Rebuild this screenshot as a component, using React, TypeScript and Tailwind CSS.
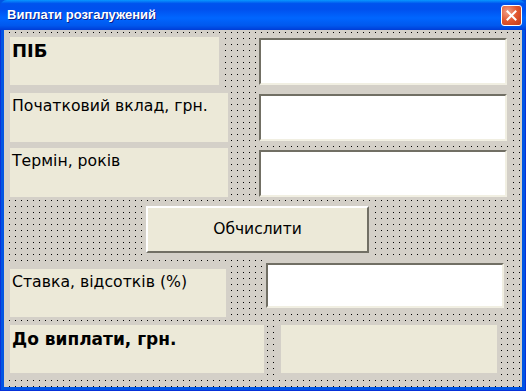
import React from "react";

const font = { fontFamily: '"DejaVu Sans", Verdana, sans-serif' };

function Label({ w, h, children, bold, size, pt = "pt-[3px]" }: { w: number; h: number; children?: React.ReactNode; bold?: boolean; size: string; pt?: string }) {
  return (
    <div
      className={`bg-[#ece9d8] shadow-[0_0_0_3px_#d4d0c8] text-black pl-[2px] leading-[20px] ${pt} ${bold ? "font-bold" : ""} ${size}`}
      style={{ width: w, height: h }}
    >
      {children}
    </div>
  );
}

function TextBox({ w, h, mt }: { w: number; h: number; mt: number }) {
  return (
    <div
      className="bg-white border-2 border-t-[#716f64] border-l-[#716f64] border-b-[#f1efe2] border-r-[#f1efe2] shadow-[0_0_0_3px_#d4d0c8]"
      style={{ width: w, height: h, marginTop: mt }}
    />
  );
}

export default function App() {
  return (
    <div className="w-[526px] h-[391px] flex flex-col bg-[#0054e3]" style={font}>
      <div className="h-[30px] shrink-0 flex items-center justify-between pl-[7px] pr-[4px] rounded-t-[7px] bg-[linear-gradient(180deg,#0997ff_0%,#0053ee_12%,#0050ee_30%,#0066ff_60%,#0058ee_85%,#003dd7_100%)]">
        <span className="text-white font-bold text-[13px] [text-shadow:1px_1px_0_#0a1e8c]" style={{ fontFamily: '"Liberation Sans", Arial, sans-serif' }}>
          Виплати розгалужений
        </span>
        <div className="w-[21px] h-[21px] rounded-[3px] border border-white bg-[radial-gradient(circle_at_30%_30%,#f0a08a_0%,#e2562e_50%,#c1391a_100%)] flex items-center justify-center">
          <svg width="11" height="11" viewBox="0 0 11 11">
            <path d="M1.5 1.5 L9.5 9.5 M9.5 1.5 L1.5 9.5" stroke="white" strokeWidth="2" strokeLinecap="square" />
          </svg>
        </div>
      </div>
      <div className="flex-1 px-[3px] pb-[3px] bg-[#0054e3] border-l border-r border-b border-[#0831d9]">
        <div className="w-full h-full bg-[#d4d0c8] bg-[radial-gradient(circle_at_5.5px_2.5px,#000_0.7px,transparent_0.8px)] bg-[size:6px_6px] flex flex-col pl-[6px]">
          <div className="flex mt-[7px] h-[48px]">
            <Label w={209} h={48} bold size="text-[18px]" pt="pt-[4px]">ПІБ</Label>
            <div className="w-[40px]" />
            <TextBox w={248} h={47} mt={1} />
          </div>
          <div className="flex mt-[8px] h-[49px]">
            <Label w={218} h={49} size="text-[15.7px]">Початковий вклад, грн.</Label>
            <div className="w-[31px]" />
            <TextBox w={248} h={47} mt={1} />
          </div>
          <div className="flex mt-[6px] h-[49px]">
            <Label w={218} h={49} size="text-[15.7px]">Термін, років</Label>
            <div className="w-[31px]" />
            <TextBox w={248} h={47} mt={2} />
          </div>
          <div className="flex mt-[9px] h-[47px]">
            <div className="w-[136px]" />
            <button className="w-[223px] h-[47px] bg-[#ece9d8] border-2 border-t-white border-l-white border-b-[#716f64] border-r-[#716f64] shadow-[0_0_0_3px_#d4d0c8] text-[15.5px] text-black flex items-center justify-center">
              Обчислити
            </button>
          </div>
          <div className="flex mt-[10px] h-[54px] items-start">
            <div className="mt-[6px]">
              <Label w={216} h={48} size="text-[15.7px]">Ставка, відсотків (%)</Label>
            </div>
            <div className="w-[40px]" />
            <TextBox w={238} h={45} mt={0} />
          </div>
          <div className="flex mt-[8px] h-[48px]">
            <Label w={254} h={48} bold size="text-[17px]" pt="pt-[4px]">До виплати, грн.</Label>
            <div className="w-[17px]" />
            <Label w={216} h={48} size="text-[15.7px]" />
          </div>
        </div>
      </div>
    </div>
  );
}
